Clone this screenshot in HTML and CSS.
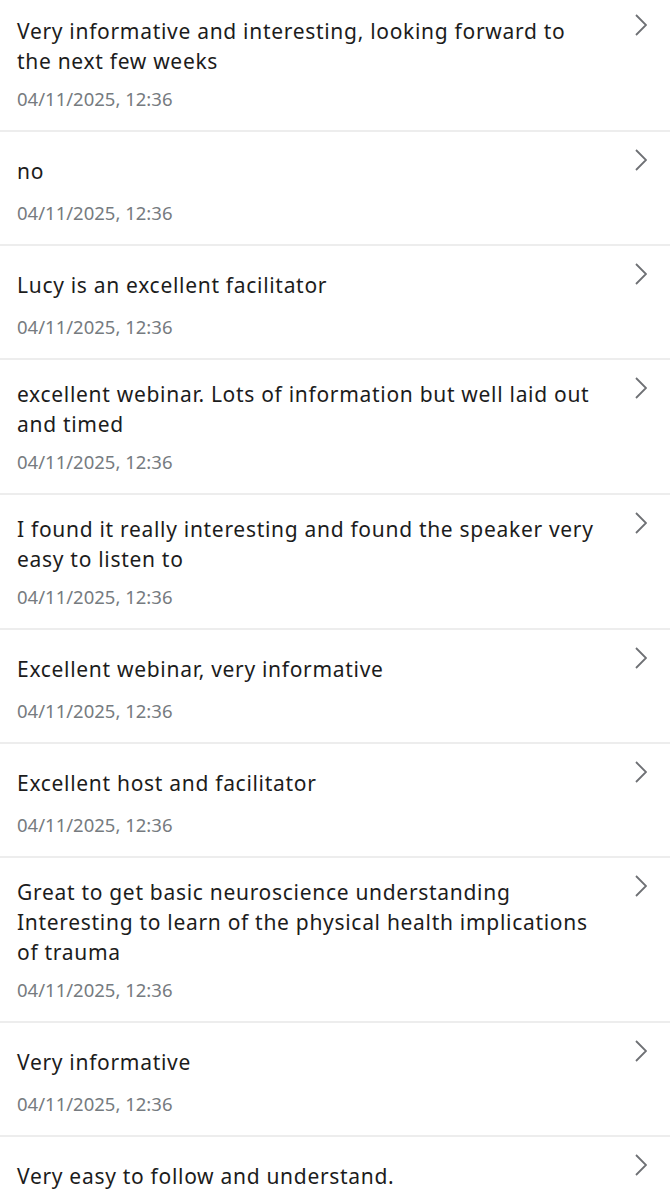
FILE: index.html
```html
<!DOCTYPE html>
<html lang="en">
<head>
    <meta charset="UTF-8">
    <title>Responses</title>
    <link rel="stylesheet" href="styles.css">
</head>
<body>

    <!-- Список відповідей -->
    <ul class="responses">
        <li class="response">
            <div class="response-body">
                <div class="response-text">Very informative and interesting, looking forward to the next few weeks</div>
                <div class="response-date">04/11/2025, 12:36</div>
            </div>
            <svg class="chevron" viewBox="0 0 12 22"><path d="M1 1 L11 11 L1 21"/></svg>
        </li>
        <li class="response">
            <div class="response-body">
                <div class="response-text">no</div>
                <div class="response-date">04/11/2025, 12:36</div>
            </div>
            <svg class="chevron" viewBox="0 0 12 22"><path d="M1 1 L11 11 L1 21"/></svg>
        </li>
        <li class="response">
            <div class="response-body">
                <div class="response-text">Lucy is an excellent facilitator</div>
                <div class="response-date">04/11/2025, 12:36</div>
            </div>
            <svg class="chevron" viewBox="0 0 12 22"><path d="M1 1 L11 11 L1 21"/></svg>
        </li>
        <li class="response">
            <div class="response-body">
                <div class="response-text">excellent webinar. Lots of information but well laid out and timed</div>
                <div class="response-date">04/11/2025, 12:36</div>
            </div>
            <svg class="chevron" viewBox="0 0 12 22"><path d="M1 1 L11 11 L1 21"/></svg>
        </li>
        <li class="response">
            <div class="response-body">
                <div class="response-text">I found it really interesting and found the speaker very easy to listen to</div>
                <div class="response-date">04/11/2025, 12:36</div>
            </div>
            <svg class="chevron" viewBox="0 0 12 22"><path d="M1 1 L11 11 L1 21"/></svg>
        </li>
        <li class="response">
            <div class="response-body">
                <div class="response-text">Excellent webinar, very informative</div>
                <div class="response-date">04/11/2025, 12:36</div>
            </div>
            <svg class="chevron" viewBox="0 0 12 22"><path d="M1 1 L11 11 L1 21"/></svg>
        </li>
        <li class="response">
            <div class="response-body">
                <div class="response-text">Excellent host and facilitator</div>
                <div class="response-date">04/11/2025, 12:36</div>
            </div>
            <svg class="chevron" viewBox="0 0 12 22"><path d="M1 1 L11 11 L1 21"/></svg>
        </li>
        <li class="response">
            <div class="response-body">
                <div class="response-text">Great to get basic neuroscience understanding<br>Interesting to learn of the physical health implications of trauma</div>
                <div class="response-date">04/11/2025, 12:36</div>
            </div>
            <svg class="chevron" viewBox="0 0 12 22"><path d="M1 1 L11 11 L1 21"/></svg>
        </li>
        <li class="response">
            <div class="response-body">
                <div class="response-text">Very informative</div>
                <div class="response-date">04/11/2025, 12:36</div>
            </div>
            <svg class="chevron" viewBox="0 0 12 22"><path d="M1 1 L11 11 L1 21"/></svg>
        </li>
        <li class="response">
            <div class="response-body">
                <div class="response-text">Very easy to follow and understand.</div>
                <div class="response-date">04/11/2025, 12:36</div>
            </div>
            <svg class="chevron" viewBox="0 0 12 22"><path d="M1 1 L11 11 L1 21"/></svg>
        </li>
    </ul>

</body>
</html>
```

FILE: styles.css
```css
body {
    margin: 0;
    background-color: #fff;
    font-family: "Noto Sans", Arial, sans-serif;
    color: #1c1c1c;
}
.responses {
    list-style: none;
    margin: 0;
    padding: 0;
}
.response {
    display: flex;
    align-items: flex-start;
    gap: 35px;
    padding: 19px 23px 18px 17px;
    border-bottom: 2px solid #ededed;
}
.response:first-child {
    padding-top: 16px;
}
.response-body {
    flex: 1;
}
.response-text {
    font-size: 21px;
    line-height: 30px;
    letter-spacing: 0.7px;
    min-height: 39px;
    display: flex;
    align-items: center;
}
.response-date {
    margin-top: 10px;
    font-size: 18.5px;
    line-height: 26px;
    color: #767b80;
}
.chevron {
    width: 12px;
    height: 22px;
    margin-top: -2px;
    flex-shrink: 0;
    fill: none;
    stroke: #6e7074;
    stroke-width: 1.8;
}
```
